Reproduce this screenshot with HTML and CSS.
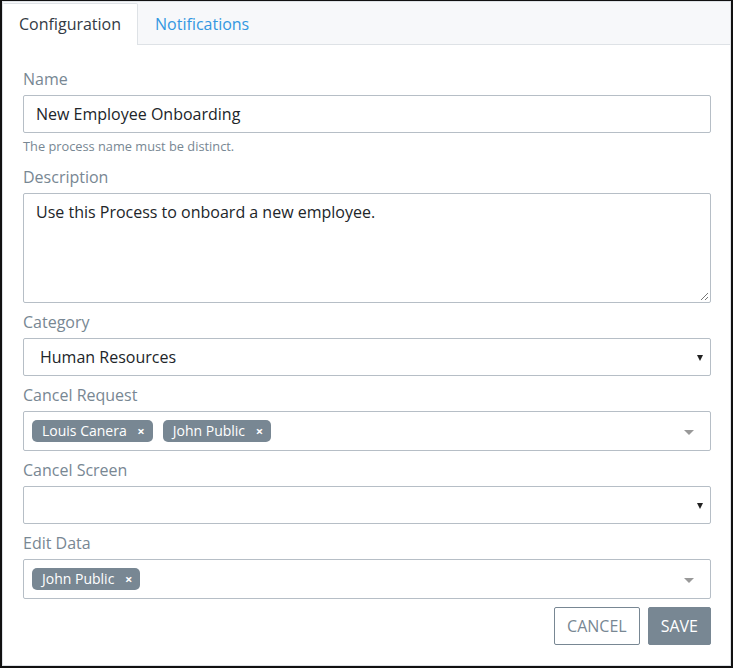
FILE: index.html
```html
<!DOCTYPE html>
<html>
<head>
<meta charset="utf-8">
<link rel="stylesheet" href="styles.css">
</head>
<body>
<div class="frame">
  <div class="card">
    <div class="tabs">
      <div class="tab active">Configuration</div>
      <div class="tab">Notifications</div>
    </div>
    <div class="body">
      <div class="group">
        <label class="label">Name</label>
        <div class="input">New Employee Onboarding</div>
        <div class="help">The process name must be distinct.</div>
      </div>
      <div class="group">
        <label class="label">Description</label>
        <div class="input textarea">Use this Process to onboard a new employee.
          <svg class="grip" width="9" height="9" viewBox="0 0 9 9"><path d="M8 1 L1 8 M8 5 L5 8" stroke="#777" stroke-width="1"/></svg>
        </div>
      </div>
      <div class="group">
        <label class="label">Category</label>
        <div class="input select"><span class="sel-text">Human Resources</span><span class="caret"></span></div>
      </div>
      <div class="group">
        <label class="label">Cancel Request</label>
        <div class="multi">
          <span class="tag">Louis Canera<span class="x">×</span></span>
          <span class="tag">John Public<span class="x">×</span></span>
          <span class="mcaret"></span>
        </div>
      </div>
      <div class="group">
        <label class="label">Cancel Screen</label>
        <div class="input select"><span class="sel-text"></span><span class="caret"></span></div>
      </div>
      <div class="group">
        <label class="label">Edit Data</label>
        <div class="multi">
          <span class="tag">John Public<span class="x">×</span></span>
          <span class="mcaret"></span>
        </div>
      </div>
      <div class="actions">
        <button class="btn btn-outline">CANCEL</button>
        <button class="btn btn-solid">SAVE</button>
      </div>
    </div>
  </div>
</div>
</body>
</html>
```

FILE: styles.css
```css
* { box-sizing: border-box; }
html, body { margin: 0; padding: 0; background: #fff; }
body {
  font-family: "Open Sans", "Noto Sans", sans-serif;
  font-size: 16px;
  line-height: 24px;
  color: #212529;
}
.frame {
  width: 733px;
  height: 668px;
  border-top: 1px solid #111;
  border-left: 2px solid #111;
  border-right: 2px solid #111;
  border-bottom: 2px solid #111;
}
.card {
  height: 100%;
  border: 1px solid #dee2e6;
  background: #fff;
}
.tabs {
  display: flex;
  background: #f7f8fa;
  border-bottom: 1px solid #dee2e6;
  padding-top: 1px;
  height: 43px;
}
.tab {
  padding: 8px 16px;
  color: #3397e1;
  border: 1px solid transparent;
  border-bottom: none;
  height: 42px;
}
.tab.active {
  background: #fff;
  color: #333a44;
  border-color: #dee2e6;
  border-left-color: transparent;
  border-top-right-radius: 2px;
  height: 42px;
  padding-left: 15px;
}
.body {
  padding: 22px 19px 0 20px;
}
.group { margin-bottom: 7px; }
.label {
  display: block;
  color: #788793;
  margin-bottom: 4px;
}
.input {
  position: relative;
  height: 38px;
  border: 1px solid #b6bec6;
  border-radius: 2px;
  padding: 6px 12px;
  color: #212529;
}
.textarea {
  height: 110px;
}
.grip { position: absolute; right: 1px; bottom: 1px; }
.select {
  display: flex;
  align-items: center;
  padding-left: 16px;
  padding-right: 7px;
}
.sel-text { flex: 1; }
.caret {
  width: 0; height: 0;
  border-left: 3px solid transparent;
  border-right: 3px solid transparent;
  border-top: 6px solid #222;
  margin-top: 1px;
}
.help {
  font-size: 12.8px;
  line-height: 19px;
  color: #788793;
  margin-top: 4px;
  padding-bottom: 2px;
}
.multi {
  position: relative;
  height: 40px;
  border: 1px solid #b6bec6;
  border-radius: 2px;
  padding: 8px 40px 0 8px;
  display: flex;
  align-items: flex-start;
  gap: 10px;
}
.tag {
  position: relative;
  display: inline-block;
  background: #788793;
  color: #fff;
  font-size: 14px;
  line-height: 14px;
  padding: 4px 26px 4px 10px;
  border-radius: 5px;
  height: 22px;
}
.tag .x {
  position: absolute;
  right: 8px;
  top: 4px;
  font-size: 13px;
  font-weight: 700;
  line-height: 14px;
}
.mcaret {
  position: absolute;
  right: 16px;
  top: 18px;
  width: 0; height: 0;
  border-left: 5px solid transparent;
  border-right: 5px solid transparent;
  border-top: 5px solid #999;
}
.actions {
  display: flex;
  justify-content: flex-end;
  gap: 8px;
  margin-top: 8px;
}
.btn {
  font-family: "Open Sans", "Noto Sans", sans-serif;
  font-size: 16px;
  line-height: 24px;
  height: 38px;
  padding: 6px 12px;
  border-radius: 2px;
  cursor: pointer;
}
.btn-outline {
  background: #fff;
  color: #788793;
  border: 1px solid #788793;
}
.btn-solid {
  background: #788793;
  color: #fff;
  border: 1px solid #788793;
}
```
